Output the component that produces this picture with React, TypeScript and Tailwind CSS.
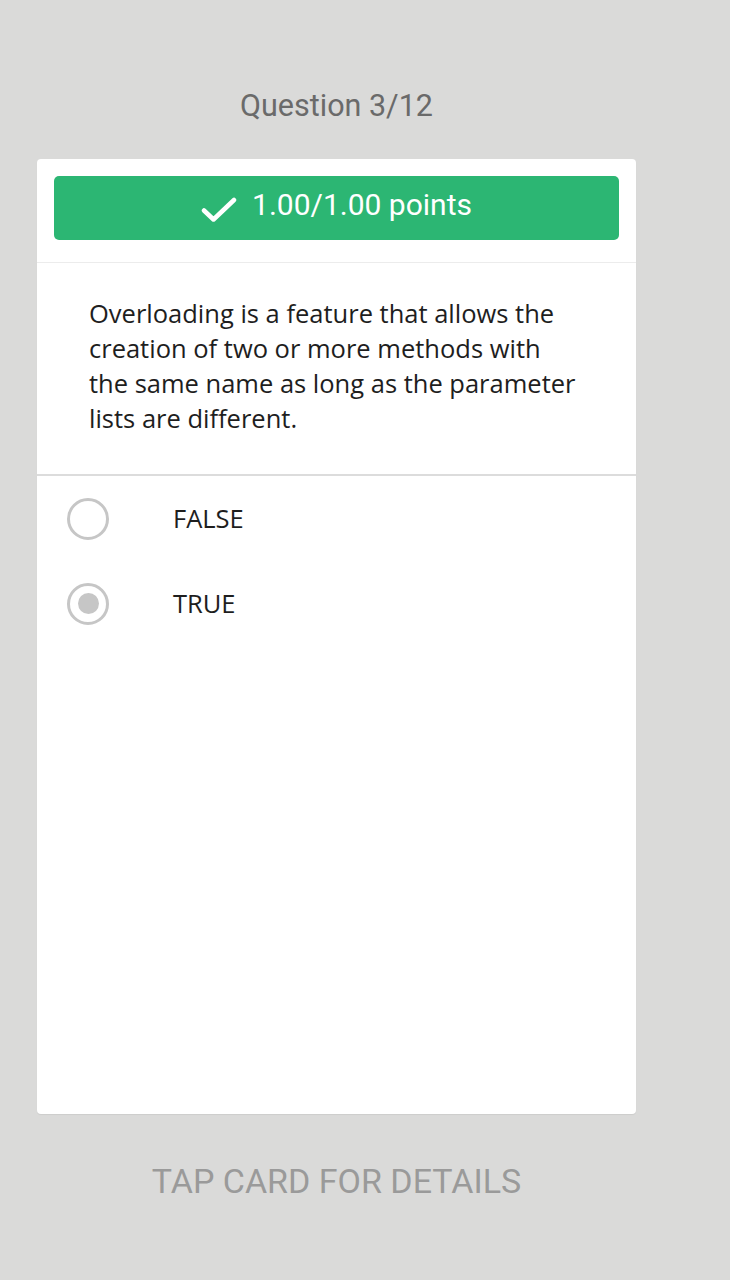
import React from 'react';

const options = [
  { label: 'FALSE', selected: false },
  { label: 'TRUE', selected: true },
];

const Radio: React.FC<{ selected: boolean }> = ({ selected }) => (
  <div className="flex h-[42px] w-[42px] shrink-0 items-center justify-center rounded-full border-[3px] border-[#c6c6c6]">
    {selected && <div className="h-[21px] w-[21px] rounded-full bg-[#c6c6c6]" />}
  </div>
);

const App: React.FC = () => {
  return (
    <div className="min-h-screen w-full bg-[#dadad9]">
      <div className="ml-[37px] flex w-[599px] flex-col">
        {/* Header */}
        <h1 className="pt-[88px] text-center font-['Roboto',sans-serif] text-[30.5px] leading-[36px] text-[#6a6a6a]">
          Question 3/12
        </h1>

        {/* Card */}
        <div className="mt-[35px] flex h-[955px] flex-col rounded-[4px] bg-white shadow-[0_1px_1px_rgba(0,0,0,0.06)]">
          <div className="border-b border-[#ececec] px-[17px] pb-[22px] pt-[17px]">
            <div className="flex h-[64px] items-center justify-center gap-[15px] rounded-[5px] bg-[#2cb673] pb-[6px] font-['Roboto',sans-serif] text-white">
              <svg width="36" height="26" viewBox="0 0 36 26" fill="none" className="mt-[10px]">
                <path d="M3 13.5 L12.5 22.5 L33 3" stroke="white" strokeWidth="4.5" strokeLinecap="round" strokeLinejoin="round" />
              </svg>
              <span className="text-[30px] leading-none">1.00/1.00 points</span>
            </div>
          </div>

          <div className="border-b-2 border-[#dcdcdc] pb-[38px] pl-[52px] pr-[30px] pt-[33px] font-['Open_Sans',sans-serif] text-[25.5px] leading-[35px] text-[#1e1e1e]">
            Overloading is a feature that allows the
            <br />
            creation of two or more methods with
            <br />
            the same name as long as the parameter
            <br />
            lists are different.
          </div>

          <div className="flex flex-col">
            {options.map((opt) => (
              <div key={opt.label} className="flex h-[85px] items-center pl-[30px]">
                <Radio selected={opt.selected} />
                <span className="ml-[64px] font-['Open_Sans',sans-serif] text-[25.5px] text-[#1e1e1e]">
                  {opt.label}
                </span>
              </div>
            ))}
          </div>
        </div>

        {/* Footer hint */}
        <p className="mt-[47px] text-center font-['Roboto',sans-serif] text-[34px] leading-[40px] text-[#9a9a9a]">
          TAP CARD FOR DETAILS
        </p>
      </div>
    </div>
  );
};

export default App;
